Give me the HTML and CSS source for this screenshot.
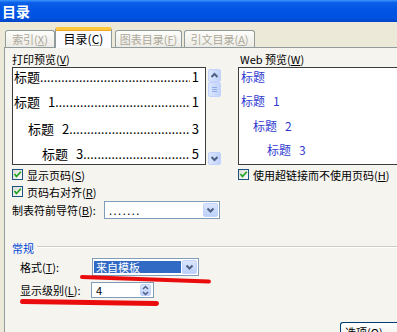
FILE: index.html
```html
<!DOCTYPE html>
<html lang="zh-CN">
<head>
<meta charset="utf-8">
<title>目录</title>
<link rel="stylesheet" href="styles.css">
</head>
<body>
<div class="window">
  <div class="titlebar">目录</div>
  <div class="tabstrip">
    <div class="tab t1">索引(<u>X</u>)</div>
    <div class="tab active t2">目录(<u>C</u>)</div>
    <div class="tab t3">图表目录(<u>F</u>)</div>
    <div class="tab t4">引文目录(<u>A</u>)</div>
  </div>
  <div class="panel">
    <div class="columns">
      <div class="col">
        <div class="label">打印预览(<u>V</u>)</div>
        <div class="preview-row">
          <div class="preview print">
            <div class="toc l0"><span class="t">标题</span><span class="dots">................................................................</span><span class="n">1</span></div>
            <div class="toc l1"><span class="t">标题</span><span class="num">1</span><span class="dots">................................................................</span><span class="n">1</span></div>
            <div class="toc l2"><span class="t">标题</span><span class="num">2</span><span class="dots">................................................................</span><span class="n">3</span></div>
            <div class="toc l3"><span class="t">标题</span><span class="num">3</span><span class="dots">................................................................</span><span class="n">5</span></div>
          </div>
          <div class="scrollbar">
            <div class="sbtn"><svg width="13" height="13" viewBox="0 0 13 13"><polyline points="3.5,8 6.5,5 9.5,8" fill="none" stroke="#4d6185" stroke-width="2"/></svg></div>
            <div class="thumb"><svg width="13" height="15" viewBox="0 0 13 15"><path d="M4 5.5h5M4 7.5h5M4 9.5h5" stroke="#8faae8" stroke-width="1"/></svg></div>
            <div class="track"></div>
            <div class="sbtn"><svg width="13" height="13" viewBox="0 0 13 13"><polyline points="3.5,5 6.5,8 9.5,5" fill="none" stroke="#4d6185" stroke-width="2"/></svg></div>
          </div>
        </div>
        <div class="check first"><span class="box"><svg width="9" height="9" viewBox="0 0 9 9"><polyline points="1.5,4 3.5,6.5 7.8,1.8" fill="none" stroke="#21a121" stroke-width="1.7"/></svg></span><span>显示页码(<u>S</u>)</span></div>
        <div class="check"><span class="box"><svg width="9" height="9" viewBox="0 0 9 9"><polyline points="1.5,4 3.5,6.5 7.8,1.8" fill="none" stroke="#21a121" stroke-width="1.7"/></svg></span><span>页码右对齐(<u>R</u>)</span></div>
        <div class="field-row">
          <span>制表符前导符(<u>B</u>):</span>
          <div class="select leader">
            <span class="value">.......</span>
            <span class="dropbtn"><svg width="13" height="14" viewBox="0 0 13 14"><polyline points="3.5,5.5 6.5,8.5 9.5,5.5" fill="none" stroke="#4d6185" stroke-width="2"/></svg></span>
          </div>
        </div>
      </div>
      <div class="col">
        <div class="label web-label">Web 预览(<u>W</u>)</div>
        <div class="preview web">
          <div class="wl w0">标题</div>
          <div class="wl w1">标题<span class="num">1</span></div>
          <div class="wl w2">标题<span class="num">2</span></div>
          <div class="wl w3">标题<span class="num">3</span></div>
        </div>
        <div class="check first"><span class="box"><svg width="9" height="9" viewBox="0 0 9 9"><polyline points="1.5,4 3.5,6.5 7.8,1.8" fill="none" stroke="#21a121" stroke-width="1.7"/></svg></span><span>使用超链接而不使用页码(<u>H</u>)</span></div>
      </div>
    </div>

    <div class="group">
      <div class="group-head"><span class="group-title">常规</span><span class="group-line"></span></div>
      <div class="grow format">
        <span>格式(<u>T</u>):</span>
        <div class="select fmt">
          <span class="value selected">来自模板</span>
          <span class="dropbtn"><svg width="13" height="14" viewBox="0 0 13 14"><polyline points="3.5,5.5 6.5,8.5 9.5,5.5" fill="none" stroke="#4d6185" stroke-width="2"/></svg></span>
        </div>
      </div>
      <div class="grow level">
        <span>显示级别(<u>L</u>):</span>
        <div class="spin">
          <span class="value">4</span>
          <span class="spinbtn"><svg width="9" height="13" viewBox="0 0 9 13"><polyline points="2,5 4.5,2.5 7,5" fill="none" stroke="#4d6185" stroke-width="1.5"/><polyline points="2,8 4.5,10.5 7,8" fill="none" stroke="#4d6185" stroke-width="1.5"/></svg></span>
        </div>
      </div>
    </div>

    <div class="buttons">
      <div class="button">选项(<u>O</u>)...</div>
    </div>
  </div>

  <div class="mark mark1"></div>
  <div class="mark mark2"></div>
</div>
</body>
</html>
```

FILE: styles.css
```css
* { scrollbar-width: none; }
::-webkit-scrollbar { display: none; width: 0; height: 0; }
html, body {
  margin: 0;
  padding: 0;
  overflow: hidden;
}
body {
  width: 397px;
  height: 332px;
  background: #ece9d8;
  font-family: "Noto Sans CJK SC", "Liberation Sans", sans-serif;
  font-size: 11px;
  color: #000;
}
u { text-decoration: underline; text-underline-offset: 1px; }

.window {
  position: relative;
  width: 397px;
  height: 332px;
  overflow: clip;
}

.titlebar {
  height: 22px;
  line-height: 22px;
  padding-left: 2px;
  color: #fff;
  font-weight: bold;
  font-size: 14px;
  background: linear-gradient(#3d95ff 0%, #0a5fe8 12%, #0055e5 45%, #0052e0 80%, #0045c8 100%);
}

.tabstrip {
  height: 25px;
  display: flex;
  align-items: flex-end;
  padding-left: 5px;
  position: relative;
  z-index: 2;
}
.tab {
  box-sizing: border-box;
  height: 17px;
  line-height: 16px;
  border: 1px solid #919b9c;
  border-bottom: none;
  border-radius: 3px 3px 0 0;
  background: linear-gradient(#fdfdfb, #ecebe5);
  color: #aca899;
  text-align: center;
  font-size: 11px;
}
.tab u { text-decoration-color: #aca899; }
.t1 { width: 50px; }
.t2 { width: 57px; }
.t3 { width: 67px; margin-left: 3px; }
.t4 { width: 71px; margin-left: 2px; }
.tab.active {
  height: 21px;
  line-height: 17px;
  margin-bottom: -1px;
  color: #000;
  background: #fcfcfe;
  border-top: 3px solid #ffc83c;
  box-shadow: inset 0 1px 0 #f5a623;
  font-size: 12px;
}

.panel {
  position: relative;
  z-index: 1;
  box-sizing: border-box;
  margin-left: 4px;
  height: 285px;
  border-left: 1px solid #919b9c;
  border-top: 1px solid #919b9c;
  background: #f5f4ef;
  padding: 3px 0 0 7px;
}

.columns {
  display: grid;
  grid-template-columns: 210px 159px;
  column-gap: 16px;
}
.col { min-width: 0; }
.label {
  height: 16px;
  line-height: 16px;
  white-space: nowrap;
}
.web-label { padding-left: 2px; }

.preview-row {
  display: flex;
  height: 98px;
}
.preview {
  box-sizing: border-box;
  height: 98px;
  border: 1px solid #3c3c3c;
  background: #fff;
  overflow: clip;
}
.preview.print {
  width: 194px;
  padding: 0 6px 0 1px;
  font-size: 13px;
}
.toc {
  display: flex;
  align-items: baseline;
  height: 18px;
  line-height: 18px;
  white-space: nowrap;
}
.toc .t { flex: none; }
.toc .num { flex: none; margin-left: 8px; }
.toc .dots {
  flex: 1;
  min-width: 0;
  overflow: clip;
  font-size: 12px;
  letter-spacing: 0.2px;
}
.toc .n { flex: none; margin-left: 2px; }
.l1 { margin-top: 7px; }
.l2 { margin-top: 9px; padding-left: 14px; }
.l3 { margin-top: 7px; padding-left: 28px; }

.scrollbar {
  width: 16px;
  box-sizing: border-box;
  padding: 2px 0 0 2px;
  display: flex;
  flex-direction: column;
}
.sbtn, .thumb {
  box-sizing: border-box;
  width: 13px;
  border: 1px solid #c3d3fd;
  border-radius: 2px;
  background: linear-gradient(90deg, #dbe6fe, #c1d3fb);
  display: flex;
}
.sbtn { height: 13px; }
.sbtn svg { margin: -1px; }
.thumb { height: 15px; }
.thumb svg { margin: -1px; }
.track { flex: 1; }

.check {
  display: flex;
  align-items: center;
  gap: 4px;
  height: 17px;
  white-space: nowrap;
}
.check.first { margin-top: 1px; }
.box {
  flex: none;
  box-sizing: border-box;
  width: 11px;
  height: 11px;
  border: 1px solid #1c5180;
  background: linear-gradient(135deg, #dcdcd7, #fbfbf9);
  display: flex;
  align-items: center;
  justify-content: center;
}

.field-row {
  display: flex;
  align-items: center;
  justify-content: space-between;
  height: 20px;
  padding-right: 2px;
}
.select {
  box-sizing: border-box;
  height: 18px;
  border: 1px solid #7f9db9;
  background: #fff;
  display: flex;
  align-items: center;
  padding: 1px;
}
.select .value {
  flex: 1;
  padding-left: 3px;
}
.leader { width: 116px; }
.leader .value { font-size: 11px; letter-spacing: 1.5px; line-height: 14px; }
.dropbtn {
  box-sizing: border-box;
  width: 15px;
  height: 14px;
  border: 1px solid #c3d3fd;
  border-radius: 2px;
  background: linear-gradient(#dbe6fe, #bcd0fa);
  display: flex;
  align-items: center;
  justify-content: center;
}
.dropbtn svg { margin: -1px; }

.preview.web {
  width: 159px;
  border-right: none;
  padding-left: 2px;
  color: #2f3bd0;
}
.wl {
  height: 18px;
  line-height: 18px;
  font-size: 12px;
}
.wl .num { margin-left: 8px; }
.w1 { margin-top: 6px; }
.w2 { margin-top: 7px; padding-left: 12px; }
.w3 { margin-top: 6px; padding-left: 26px; }

.group { margin-top: 20px; }
.group-head {
  display: flex;
  height: 16px;
  line-height: 16px;
}
.group-title { color: #0046d5; }
.group-line {
  flex: 1;
  margin: 6px 0 0 3px;
  height: 0;
  border-top: 1px solid #d0cdc0;
  border-bottom: 1px solid #fff;
}
.grow {
  display: grid;
  grid-template-columns: 72px auto;
  align-items: center;
  padding-left: 8px;
  justify-items: start;
}
.format { margin-top: 2px; height: 18px; }
.fmt { width: 107px; }
.fmt .value.selected {
  margin-right: 1px;
  padding-left: 2px;
  height: 12px;
  line-height: 12px;
  background: #316ac5;
  color: #fff;
}
.level { margin-top: 6px; height: 16px; }
.spin {
  box-sizing: border-box;
  width: 63px;
  height: 16px;
  margin-left: -1px;
  border: 1px solid #7f9db9;
  background: #fff;
  display: flex;
  align-items: center;
  padding: 1px;
}
.spin .value { flex: 1; padding-left: 3px; line-height: 12px; }
.spinbtn {
  box-sizing: border-box;
  width: 11px;
  height: 12px;
  margin-right: 1px;
  border: 1px solid #c3d3fd;
  border-radius: 2px;
  background: linear-gradient(#dbe6fe, #bcd0fa);
  display: flex;
  align-items: center;
  justify-content: center;
}
.spinbtn svg { margin: -1px; }

.buttons {
  display: flex;
  justify-content: flex-end;
  margin-top: 24px;
}
.button {
  box-sizing: border-box;
  width: 57px;
  height: 10px;
  border: 1px solid #003c74;
  border-right: none;
  border-bottom: none;
  border-radius: 3px 0 0 0;
  background: linear-gradient(#ffffff, #f4f4f0);
  padding-left: 4px;
  line-height: 19px;
  white-space: nowrap;
  overflow: clip;
}

.mark {
  position: absolute;
  z-index: 5;
  height: 4px;
  background: #ea0c0c;
  border-radius: 3px;
  transform-origin: left center;
}
.mark1 {
  left: 80px;
  top: 275px;
  width: 131px;
  transform: rotate(2deg);
}
.mark2 {
  left: 20px;
  top: 299px;
  width: 139px;
  height: 5px;
  transform: rotate(0.8deg);
}
```
